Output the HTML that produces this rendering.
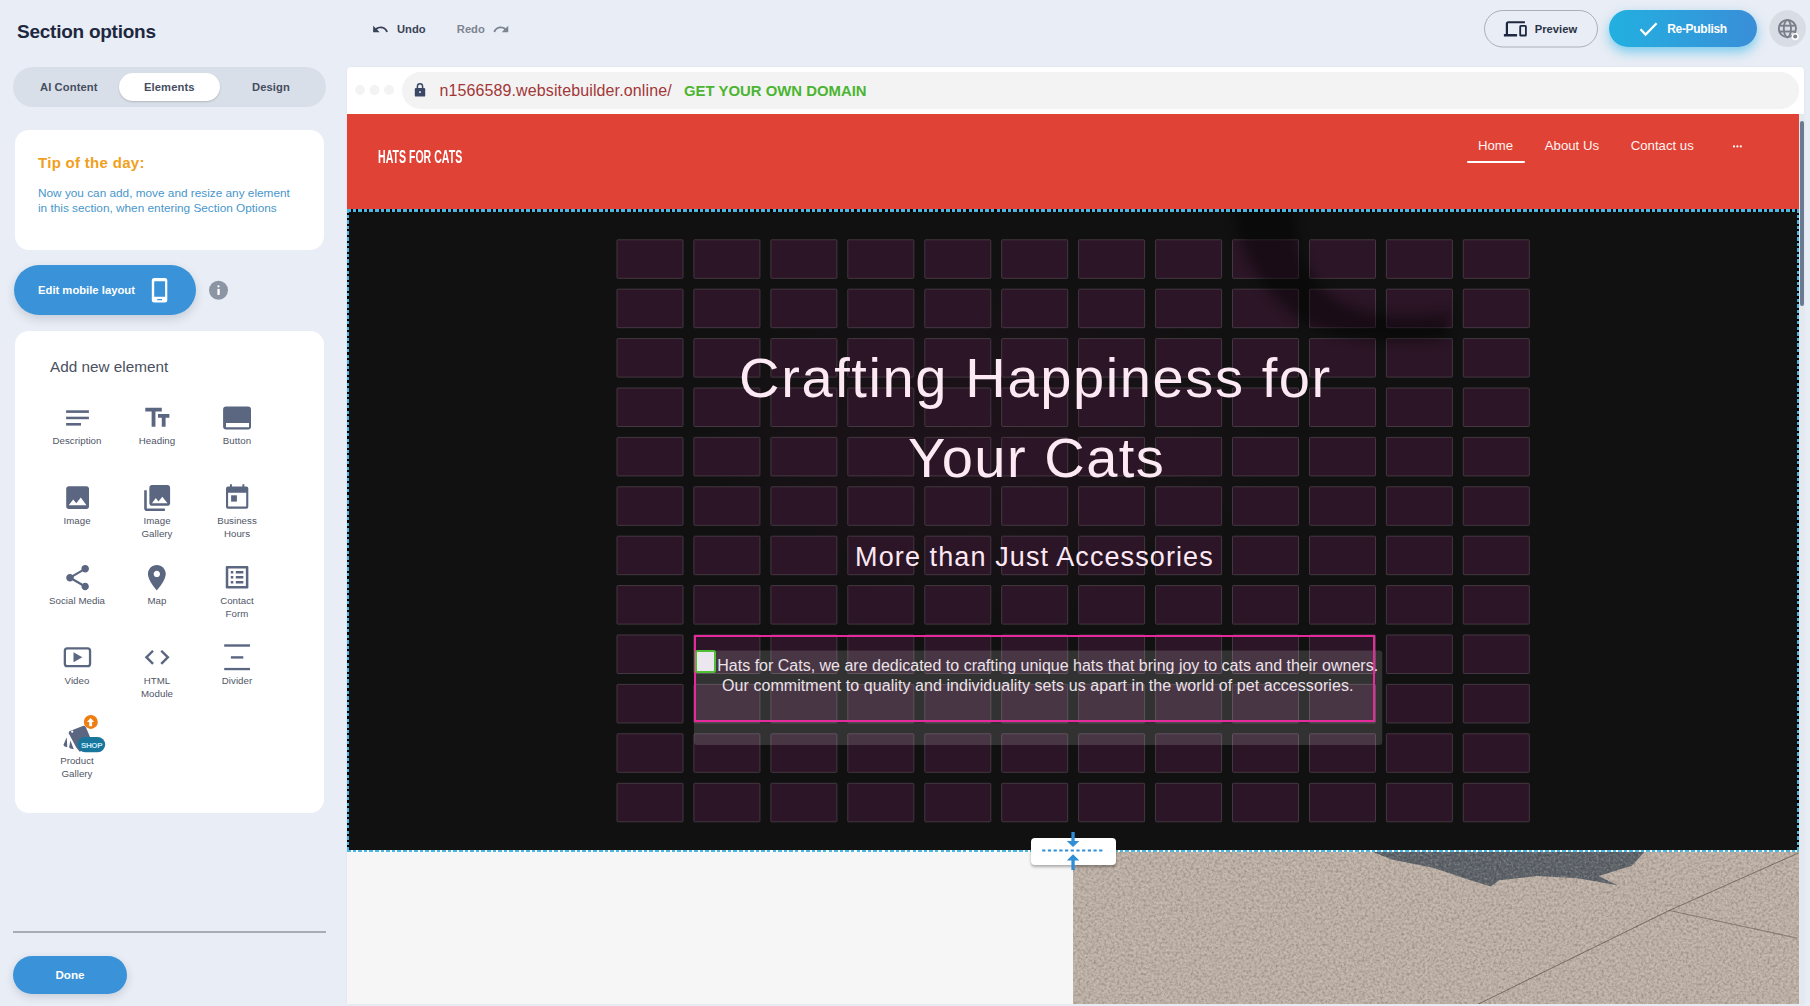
<!DOCTYPE html>
<html><head><meta charset="utf-8">
<style>
*{box-sizing:border-box;margin:0;padding:0}
html,body{width:1810px;height:1006px;overflow:hidden;background:#e9edf5;font-family:"Liberation Sans",sans-serif}
.a{position:absolute;white-space:nowrap}
.title{left:17px;top:20px;font-size:19px;font-weight:bold;color:#1d2840;letter-spacing:-0.25px;line-height:23px}
.tabs{left:13px;top:67px;width:313px;height:40px;border-radius:20px;background:#d9dfe9}
.tabon{left:119px;top:73px;width:101px;height:28px;border-radius:14px;background:#fff;box-shadow:0 1px 2px rgba(0,0,0,.18)}
.tab{top:80px;font-size:11.2px;font-weight:bold;color:#454d5f;line-height:14px;letter-spacing:0.1px}
.card{background:#fff;border-radius:14px}
.tiph{left:38px;top:154.4px;font-size:15px;font-weight:bold;color:#f0a020;line-height:18px;letter-spacing:0.3px}
.tipb{left:38px;top:185.5px;font-size:11.8px;color:#4896cb;line-height:15.5px}
.btn{background:#3a93d8;color:#fff;font-weight:bold}
.lbl{font-size:9.7px;color:#4f5566;text-align:center;line-height:13.3px;width:80px;white-space:normal;letter-spacing:0.05px;margin-top:-0.9px}
.ico{fill:#64728b}
</style></head><body>
<!-- LEFT PANEL -->
<div class="a title">Section options</div>
<div class="a tabs"></div>
<div class="a tabon"></div>
<div class="a tab" style="left:40px">AI Content</div>
<div class="a tab" style="left:144px">Elements</div>
<div class="a tab" style="left:252px">Design</div>

<div class="a card" style="left:15px;top:130px;width:309px;height:120px"></div>
<div class="a tiph">Tip of the day:</div>
<div class="a tipb">Now you can add, move and resize any element<br>in this section, when entering Section Options</div>

<div class="a btn" style="left:14px;top:265px;width:182px;height:50px;border-radius:25px;box-shadow:0 4px 10px rgba(40,60,90,.18)"></div>
<div class="a" style="left:38px;top:283px;font-size:11.25px;font-weight:bold;color:#fff;line-height:14px">Edit mobile layout</div>
<svg class="a" style="left:150px;top:276px" width="20" height="28" viewBox="0 0 20 28"><path fill="#fff" fill-rule="evenodd" d="M4.3 1.9H14.8A2.5 2.5 0 0 1 17.3 4.4V24A2.5 2.5 0 0 1 14.8 26.5H4.3A2.5 2.5 0 0 1 1.8 24V4.4A2.5 2.5 0 0 1 4.3 1.9zM4.2 5.3V20.8H15.1V5.3zM7.3 23V24.3H12V23z"/></svg>
<svg class="a" style="left:208px;top:280px" width="20" height="20" viewBox="0 0 20 20"><circle cx="10.5" cy="10.2" r="9.45" fill="#8b95a3"/><circle cx="10.5" cy="6.3" r="1.15" fill="#fff"/><rect x="9.4" y="8.9" width="2.3" height="6" fill="#fff"/></svg>

<div class="a card" style="left:15px;top:331px;width:309px;height:482px"></div>
<div class="a" style="left:50px;top:357.5px;font-size:15.3px;color:#4a5161;line-height:18px">Add new element</div>
<!-- ELEMENT ICONS -->
<svg class="a" style="left:0;top:0" width="340" height="800" viewBox="0 0 340 800">
<g fill="#5b6680">
<!-- description -->
<rect x="66.1" y="410.3" width="22.8" height="2.6"/><rect x="66.1" y="416.7" width="22.8" height="2.5"/><rect x="66.1" y="423" width="14.9" height="2.6"/>
<!-- heading -->
<path transform="translate(142.1 402.6) scale(1.27)" d="M2.5 4v3h5v12h3V7h5V4h-13zm19 5h-9v3h3v7h3v-7h3V9z"/>
<!-- button -->
<path fill-rule="evenodd" d="M226.1 406.6h21.9a3 3 0 0 1 3 3v16.9a3 3 0 0 1-3 3h-21.9a3 3 0 0 1-3-3v-16.9a3 3 0 0 1 3-3zM226 422.9v4.4h23v-4.4z"/>
<!-- image -->
<path transform="translate(62.4 482.4) scale(1.267)" d="M21 19V5c0-1.1-.9-2-2-2H5c-1.1 0-2 .9-2 2v14c0 1.1.9 2 2 2h14c1.1 0 2-.9 2-2zM8.5 13.5l2.5 3.01L14.5 12l4.5 6H5l3.5-4.5z"/>
<!-- gallery -->
<path transform="translate(141.6 482.5) scale(1.295)" d="M22 16V4c0-1.1-.9-2-2-2H8c-1.1 0-2 .9-2 2v12c0 1.1.9 2 2 2h12c1.1 0 2-.9 2-2zm-11-4l2.03 2.71L16 11l4 5H8l3-4zM2 6v14c0 1.1.9 2 2 2h14v-2H4V6H2z"/>
<!-- calendar -->
<path fill-rule="evenodd" d="M228 486.6h18.3a2 2 0 0 1 2 2v18.2a2 2 0 0 1-2 2h-18.3a2 2 0 0 1-2-2v-18.2a2 2 0 0 1 2-2zM228.1 492.7v13.9h18.1v-13.9z"/>
<rect x="230" y="484.2" width="1.9" height="3"/><rect x="242.4" y="484.2" width="1.9" height="3"/><rect x="231.1" y="495.3" width="5.8" height="6.3"/>
<!-- share -->
<path transform="translate(62.4 562.5) scale(1.265)" d="M18 16.08c-.76 0-1.44.3-1.96.77L8.91 12.7c.05-.23.09-.46.09-.7s-.04-.47-.09-.7l7.05-4.11c.54.5 1.25.81 2.04.81 1.66 0 3-1.34 3-3s-1.34-3-3-3-3 1.34-3 3c0 .24.04.47.09.7L8.04 9.81C7.5 9.31 6.79 9 6 9c-1.66 0-3 1.34-3 3s1.34 3 3 3c.79 0 1.5-.31 2.04-.81l7.12 4.16c-.05.21-.08.43-.08.65 0 1.61 1.31 2.92 2.92 2.92 1.61 0 2.92-1.31 2.92-2.92s-1.31-2.92-2.92-2.92z"/>
<!-- map -->
<path transform="translate(141.6 562.5) scale(1.27)" d="M12 2C8.13 2 5 5.130 5 9c0 5.25 7 13 7 13s7-7.75 7-13c0-3.87-3.13-7-7-7zm0 9.5c-1.38 0-2.5-1.12-2.5-2.5s1.12-2.5 2.5-2.5 2.5 1.12 2.5 2.5-1.12 2.5-2.5 2.5z"/>
<!-- contact form -->
<path transform="translate(222 562.2) scale(1.256)" d="M19 5v14H5V5h14m1.1-2H3.9c-.5 0-.9.4-.9.9v16.2c0 .4.4.9.9.9h16.2c.4 0 .9-.5.9-.9V3.9c0-.5-.5-.9-.9-.9zM11 7h6v2h-6V7zm0 4h6v2h-6v-2zm0 4h6v2h-6zM7 7h2v2H7zm0 4h2v2H7zm0 4h2v2H7z"/>
<!-- video -->
<rect x="64.85" y="648.45" width="25.2" height="17.7" rx="2.5" fill="none" stroke="#5b6680" stroke-width="2.3"/>
<path d="M73.5 652.3L82.3 657.3L73.5 662.3z"/>
<!-- code -->
<path transform="translate(142.2 642.5) scale(1.245 1.233)" d="M9.4 16.6L4.8 12l4.6-4.6L8 6l-6 6 6 6 1.4-1.4zm5.2 0l4.6-4.6-4.6-4.6L16 6l6 6-6 6-1.4-1.4z"/>
<!-- divider -->
<rect x="224.2" y="644.3" width="25.8" height="2.4"/><rect x="230.9" y="656.2" width="12.4" height="2.4"/><rect x="224.2" y="667.9" width="25.8" height="2.3"/>
<!-- product gallery -->
<path d="M69.9 730.9L82.8 725.9Q85 725.2 86 727.4L90 737L80 752L76.4 747.8L68.8 733.5Q68.4 731.6 69.9 730.9z"/>
<path d="M66.7 737.3L63.6 744.5Q63.4 746 64.8 746.5L67.3 747.2z"/>
<path d="M70.4 740.5L69.2 746.8Q69 748.2 70.5 748.6L73.8 749.3z"/>
</g>
<circle cx="72.2" cy="731.7" r="1.1" fill="#fff"/>
<rect x="77.6" y="737" width="27.6" height="15.2" rx="7.6" fill="#18759b"/>
<text x="91.6" y="747.6" text-anchor="middle" font-family="Liberation Sans" font-weight="bold" font-size="8" fill="#c4e8f6" letter-spacing="-0.35">SHOP</text>
<circle cx="90.8" cy="721.9" r="7" fill="#ee7d12"/>
<path d="M87 722.1L90.6 717.9L94.2 722.1H92.1V726.3H89.2V722.1z" fill="#fff"/>
</svg>
<!-- labels -->
<div class="a lbl" style="left:37px;top:435px">Description</div>
<div class="a lbl" style="left:117px;top:435px">Heading</div>
<div class="a lbl" style="left:197px;top:435px">Button</div>
<div class="a lbl" style="left:37px;top:515px">Image</div>
<div class="a lbl" style="left:117px;top:515px">Image<br>Gallery</div>
<div class="a lbl" style="left:197px;top:515px">Business<br>Hours</div>
<div class="a lbl" style="left:37px;top:595px">Social Media</div>
<div class="a lbl" style="left:117px;top:595px">Map</div>
<div class="a lbl" style="left:197px;top:595px">Contact<br>Form</div>
<div class="a lbl" style="left:37px;top:674.5px">Video</div>
<div class="a lbl" style="left:117px;top:674.5px">HTML<br>Module</div>
<div class="a lbl" style="left:197px;top:674.5px">Divider</div>
<div class="a lbl" style="left:37px;top:754.5px">Product<br>Gallery</div>

<div class="a" style="left:13px;top:931px;width:313px;height:2px;background:#a8acb4"></div>
<div class="a btn" style="left:13px;top:956px;width:114px;height:38px;border-radius:19px;box-shadow:0 3px 8px rgba(40,60,90,.18)"></div>
<div class="a" style="left:13px;top:968px;width:114px;text-align:center;font-size:11.6px;font-weight:bold;color:#fff;line-height:14px">Done</div>
<!-- TOP BAR -->
<svg class="a" style="left:0;top:0" width="1810" height="60" viewBox="0 0 1810 60">
<path fill="#394356" transform="translate(371.7 20.7) scale(0.72)" d="M12.5 8c-2.65 0-5.05.99-6.9 2.6L2 7v9h9l-3.62-3.62c1.39-1.16 3.16-1.88 5.12-1.88 3.54 0 6.55 2.31 7.6 5.5l2.37-.78C21.08 11.03 17.15 8 12.5 8z"/>
<path fill="#7c8492" transform="translate(492.4 20.7) scale(0.72)" d="M18.4 10.6C16.55 8.99 14.15 8 11.5 8c-4.65 0-8.58 3.030-9.96 7.22L3.9 16c1.05-3.19 4.05-5.5 7.6-5.5 1.95 0 3.73.72 5.12 1.88L13 16h9V7l-3.6 3.6z"/>
<!-- preview -->
<rect x="1484.5" y="10.5" width="113" height="36.5" rx="18.25" fill="none" stroke="#a9afb9" stroke-width="1"/>
<g fill="#1d2740">
<path d="M1508.6 21.2H1524.9V23.3H1508V35H1505.8V23.9Q1505.8 21.2 1508.6 21.2z"/>
<rect x="1503.9" y="33.9" width="13.2" height="2.6" rx="0.6"/>
<path fill-rule="evenodd" d="M1520.8 25H1525.3Q1526.8 25 1526.8 26.5V35Q1526.8 36.5 1525.3 36.5H1520.8Q1519.3 36.5 1519.3 35V26.5Q1519.3 25 1520.8 25zM1521.1 26.8V34.6H1525V26.8z"/>
</g>
<!-- globe -->
<circle cx="1787.6" cy="28.6" r="18.3" fill="#d8dde5"/>
<g fill="none" stroke="#7a7f89" stroke-width="1.9">
<circle cx="1787.4" cy="28.6" r="8.6"/>
<ellipse cx="1787.4" cy="28.6" rx="3.6" ry="8.6"/>
<line x1="1779" y1="25.7" x2="1796" y2="25.7"/>
<line x1="1779" y1="31.5" x2="1796" y2="31.5"/>
</g>
<circle cx="1795.2" cy="36.6" r="3.6" fill="#fff"/>
<circle cx="1795.2" cy="36.6" r="2" fill="#7a7f89"/>
</svg>
<div class="a" style="left:397px;top:22px;font-size:11.2px;font-weight:bold;color:#394356;line-height:14px">Undo</div>
<div class="a" style="left:456.8px;top:22px;font-size:11.2px;font-weight:bold;color:#7c8492;line-height:14px">Redo</div>
<div class="a" style="left:1534.8px;top:22.3px;font-size:11.2px;font-weight:bold;color:#2a3346;line-height:14px">Preview</div>
<div class="a" style="left:1609.4px;top:9.8px;width:147.6px;height:37.5px;border-radius:19px;background:linear-gradient(90deg,#22b0e0,#3a8ed8);box-shadow:0 5px 12px rgba(30,175,230,.55)"></div>
<svg class="a" style="left:1636px;top:18px" width="26" height="22" viewBox="0 0 26 22"><path d="M4.5 11.3L9.6 16.6L20.6 5.2" fill="none" stroke="#fff" stroke-width="2.3"/></svg>
<div class="a" style="left:1667.2px;top:22.1px;font-size:12px;font-weight:bold;color:#fff;line-height:14px;letter-spacing:-0.3px">Re-Publish</div>
<!-- BROWSER -->
<div class="a" style="left:347px;top:67px;width:1457.4px;height:937px;background:#fff;border-radius:4px 4px 0 0;box-shadow:0 0 3px rgba(0,0,0,.05)"></div>
<div class="a" style="left:1799.4px;top:114px;width:5px;height:890px;background:#e4e8ef"></div>
<div class="a" style="left:1799.6px;top:121px;width:4.8px;height:185px;border-radius:2.4px;background:#6b7a90"></div>
<div class="a" style="left:402px;top:72px;width:1397px;height:37px;border-radius:18.5px;background:#f3f3f3"></div>
<svg class="a" style="left:347px;top:67px" width="100" height="47" viewBox="0 0 100 47">
<circle cx="13" cy="23" r="5" fill="#f3f3f3"/><circle cx="27.5" cy="23" r="5" fill="#f3f3f3"/><circle cx="42" cy="23" r="5" fill="#f3f3f3"/>
<path d="M70.4 21.5V19.4a2.6 2.6 0 0 1 5.2 0V21.5" fill="none" stroke="#3a4865" stroke-width="1.5"/>
<rect x="67.8" y="21" width="10.4" height="8.6" rx="1.2" fill="#3a4865"/><rect x="72.2" y="24.3" width="1.6" height="1.6" fill="#fff"/>
</svg>
<div class="a" style="left:439.4px;top:81.5px;font-size:16px;color:#a23737;line-height:18px;letter-spacing:0.12px">n1566589.websitebuilder.online/</div>
<div class="a" style="left:684px;top:81.9px;font-size:14.9px;font-weight:bold;color:#4bb531;line-height:18px">GET YOUR OWN DOMAIN</div>

<!-- HEADER -->
<div class="a" style="left:347px;top:114px;width:1452px;height:96px;background:#e04236"></div>
<div class="a" style="left:377.9px;top:146.2px;font-size:19px;font-weight:bold;color:#fff;line-height:22px;transform:scaleX(0.5565);transform-origin:0 0">HATS FOR CATS</div>
<div class="a" style="left:1478px;top:137.6px;font-size:13.2px;color:#fff4f2;line-height:16px">Home</div>
<div class="a" style="left:1544.8px;top:137.6px;font-size:13.2px;color:#fff4f2;line-height:16px">About Us</div>
<div class="a" style="left:1630.7px;top:137.6px;font-size:13.2px;color:#fff4f2;line-height:16px">Contact us</div>
<div class="a" style="left:1467px;top:160.9px;width:57.7px;height:2px;border-radius:1px;background:#fff"></div>
<svg class="a" style="left:1730px;top:143px" width="14" height="6" viewBox="0 0 14 6"><circle cx="4" cy="3.4" r="1.1" fill="#fff"/><circle cx="7.4" cy="3.4" r="1.1" fill="#fff"/><circle cx="10.8" cy="3.4" r="1.1" fill="#fff"/></svg>

<!-- HERO -->
<div class="a" style="left:347px;top:209px;width:1452px;height:643px;background:#111111;overflow:hidden">
<svg class="a" style="left:0;top:0" width="1452" height="643" viewBox="0 0 1452 643">
<defs>
<radialGradient id="g1" cx="0.5" cy="0.5" r="0.5"><stop offset="0" stop-color="#3a1530" stop-opacity=".35"/><stop offset="1" stop-color="#3a1530" stop-opacity="0"/></radialGradient>
</defs>
<ellipse cx="640" cy="240" rx="300" ry="180" fill="url(#g1)"/>
<g fill="#2b1526" stroke="#443840" stroke-width="1">
<rect x="270.0" y="30.8" width="66" height="38.5" rx="0.7"/>
<rect x="346.9" y="30.8" width="66" height="38.5" rx="0.7"/>
<rect x="423.9" y="30.8" width="66" height="38.5" rx="0.7"/>
<rect x="500.8" y="30.8" width="66" height="38.5" rx="0.7"/>
<rect x="577.8" y="30.8" width="66" height="38.5" rx="0.7"/>
<rect x="654.7" y="30.8" width="66" height="38.5" rx="0.7"/>
<rect x="731.6" y="30.8" width="66" height="38.5" rx="0.7"/>
<rect x="808.6" y="30.8" width="66" height="38.5" rx="0.7"/>
<rect x="885.5" y="30.8" width="66" height="38.5" rx="0.7"/>
<rect x="962.5" y="30.8" width="66" height="38.5" rx="0.7"/>
<rect x="1039.4" y="30.8" width="66" height="38.5" rx="0.7"/>
<rect x="1116.3" y="30.8" width="66" height="38.5" rx="0.7"/>
<rect x="270.0" y="80.2" width="66" height="38.5" rx="0.7"/>
<rect x="346.9" y="80.2" width="66" height="38.5" rx="0.7"/>
<rect x="423.9" y="80.2" width="66" height="38.5" rx="0.7"/>
<rect x="500.8" y="80.2" width="66" height="38.5" rx="0.7"/>
<rect x="577.8" y="80.2" width="66" height="38.5" rx="0.7"/>
<rect x="654.7" y="80.2" width="66" height="38.5" rx="0.7"/>
<rect x="731.6" y="80.2" width="66" height="38.5" rx="0.7"/>
<rect x="808.6" y="80.2" width="66" height="38.5" rx="0.7"/>
<rect x="885.5" y="80.2" width="66" height="38.5" rx="0.7"/>
<rect x="962.5" y="80.2" width="66" height="38.5" rx="0.7"/>
<rect x="1039.4" y="80.2" width="66" height="38.5" rx="0.7"/>
<rect x="1116.3" y="80.2" width="66" height="38.5" rx="0.7"/>
<rect x="270.0" y="129.6" width="66" height="38.5" rx="0.7"/>
<rect x="346.9" y="129.6" width="66" height="38.5" rx="0.7"/>
<rect x="423.9" y="129.6" width="66" height="38.5" rx="0.7"/>
<rect x="500.8" y="129.6" width="66" height="38.5" rx="0.7"/>
<rect x="577.8" y="129.6" width="66" height="38.5" rx="0.7"/>
<rect x="654.7" y="129.6" width="66" height="38.5" rx="0.7"/>
<rect x="731.6" y="129.6" width="66" height="38.5" rx="0.7"/>
<rect x="808.6" y="129.6" width="66" height="38.5" rx="0.7"/>
<rect x="885.5" y="129.6" width="66" height="38.5" rx="0.7"/>
<rect x="962.5" y="129.6" width="66" height="38.5" rx="0.7"/>
<rect x="1039.4" y="129.6" width="66" height="38.5" rx="0.7"/>
<rect x="1116.3" y="129.6" width="66" height="38.5" rx="0.7"/>
<rect x="270.0" y="179.0" width="66" height="38.5" rx="0.7"/>
<rect x="346.9" y="179.0" width="66" height="38.5" rx="0.7"/>
<rect x="423.9" y="179.0" width="66" height="38.5" rx="0.7"/>
<rect x="500.8" y="179.0" width="66" height="38.5" rx="0.7"/>
<rect x="577.8" y="179.0" width="66" height="38.5" rx="0.7"/>
<rect x="654.7" y="179.0" width="66" height="38.5" rx="0.7"/>
<rect x="731.6" y="179.0" width="66" height="38.5" rx="0.7"/>
<rect x="808.6" y="179.0" width="66" height="38.5" rx="0.7"/>
<rect x="885.5" y="179.0" width="66" height="38.5" rx="0.7"/>
<rect x="962.5" y="179.0" width="66" height="38.5" rx="0.7"/>
<rect x="1039.4" y="179.0" width="66" height="38.5" rx="0.7"/>
<rect x="1116.3" y="179.0" width="66" height="38.5" rx="0.7"/>
<rect x="270.0" y="228.4" width="66" height="38.5" rx="0.7"/>
<rect x="346.9" y="228.4" width="66" height="38.5" rx="0.7"/>
<rect x="423.9" y="228.4" width="66" height="38.5" rx="0.7"/>
<rect x="500.8" y="228.4" width="66" height="38.5" rx="0.7"/>
<rect x="577.8" y="228.4" width="66" height="38.5" rx="0.7"/>
<rect x="654.7" y="228.4" width="66" height="38.5" rx="0.7"/>
<rect x="731.6" y="228.4" width="66" height="38.5" rx="0.7"/>
<rect x="808.6" y="228.4" width="66" height="38.5" rx="0.7"/>
<rect x="885.5" y="228.4" width="66" height="38.5" rx="0.7"/>
<rect x="962.5" y="228.4" width="66" height="38.5" rx="0.7"/>
<rect x="1039.4" y="228.4" width="66" height="38.5" rx="0.7"/>
<rect x="1116.3" y="228.4" width="66" height="38.5" rx="0.7"/>
<rect x="270.0" y="277.8" width="66" height="38.5" rx="0.7"/>
<rect x="346.9" y="277.8" width="66" height="38.5" rx="0.7"/>
<rect x="423.9" y="277.8" width="66" height="38.5" rx="0.7"/>
<rect x="500.8" y="277.8" width="66" height="38.5" rx="0.7"/>
<rect x="577.8" y="277.8" width="66" height="38.5" rx="0.7"/>
<rect x="654.7" y="277.8" width="66" height="38.5" rx="0.7"/>
<rect x="731.6" y="277.8" width="66" height="38.5" rx="0.7"/>
<rect x="808.6" y="277.8" width="66" height="38.5" rx="0.7"/>
<rect x="885.5" y="277.8" width="66" height="38.5" rx="0.7"/>
<rect x="962.5" y="277.8" width="66" height="38.5" rx="0.7"/>
<rect x="1039.4" y="277.8" width="66" height="38.5" rx="0.7"/>
<rect x="1116.3" y="277.8" width="66" height="38.5" rx="0.7"/>
<rect x="270.0" y="327.2" width="66" height="38.5" rx="0.7"/>
<rect x="346.9" y="327.2" width="66" height="38.5" rx="0.7"/>
<rect x="423.9" y="327.2" width="66" height="38.5" rx="0.7"/>
<rect x="500.8" y="327.2" width="66" height="38.5" rx="0.7"/>
<rect x="577.8" y="327.2" width="66" height="38.5" rx="0.7"/>
<rect x="654.7" y="327.2" width="66" height="38.5" rx="0.7"/>
<rect x="731.6" y="327.2" width="66" height="38.5" rx="0.7"/>
<rect x="808.6" y="327.2" width="66" height="38.5" rx="0.7"/>
<rect x="885.5" y="327.2" width="66" height="38.5" rx="0.7"/>
<rect x="962.5" y="327.2" width="66" height="38.5" rx="0.7"/>
<rect x="1039.4" y="327.2" width="66" height="38.5" rx="0.7"/>
<rect x="1116.3" y="327.2" width="66" height="38.5" rx="0.7"/>
<rect x="270.0" y="376.6" width="66" height="38.5" rx="0.7"/>
<rect x="346.9" y="376.6" width="66" height="38.5" rx="0.7"/>
<rect x="423.9" y="376.6" width="66" height="38.5" rx="0.7"/>
<rect x="500.8" y="376.6" width="66" height="38.5" rx="0.7"/>
<rect x="577.8" y="376.6" width="66" height="38.5" rx="0.7"/>
<rect x="654.7" y="376.6" width="66" height="38.5" rx="0.7"/>
<rect x="731.6" y="376.6" width="66" height="38.5" rx="0.7"/>
<rect x="808.6" y="376.6" width="66" height="38.5" rx="0.7"/>
<rect x="885.5" y="376.6" width="66" height="38.5" rx="0.7"/>
<rect x="962.5" y="376.6" width="66" height="38.5" rx="0.7"/>
<rect x="1039.4" y="376.6" width="66" height="38.5" rx="0.7"/>
<rect x="1116.3" y="376.6" width="66" height="38.5" rx="0.7"/>
<rect x="270.0" y="426.0" width="66" height="38.5" rx="0.7"/>
<rect x="346.9" y="426.0" width="66" height="38.5" rx="0.7"/>
<rect x="423.9" y="426.0" width="66" height="38.5" rx="0.7"/>
<rect x="500.8" y="426.0" width="66" height="38.5" rx="0.7"/>
<rect x="577.8" y="426.0" width="66" height="38.5" rx="0.7"/>
<rect x="654.7" y="426.0" width="66" height="38.5" rx="0.7"/>
<rect x="731.6" y="426.0" width="66" height="38.5" rx="0.7"/>
<rect x="808.6" y="426.0" width="66" height="38.5" rx="0.7"/>
<rect x="885.5" y="426.0" width="66" height="38.5" rx="0.7"/>
<rect x="962.5" y="426.0" width="66" height="38.5" rx="0.7"/>
<rect x="1039.4" y="426.0" width="66" height="38.5" rx="0.7"/>
<rect x="1116.3" y="426.0" width="66" height="38.5" rx="0.7"/>
<rect x="270.0" y="475.4" width="66" height="38.5" rx="0.7"/>
<rect x="346.9" y="475.4" width="66" height="38.5" rx="0.7"/>
<rect x="423.9" y="475.4" width="66" height="38.5" rx="0.7"/>
<rect x="500.8" y="475.4" width="66" height="38.5" rx="0.7"/>
<rect x="577.8" y="475.4" width="66" height="38.5" rx="0.7"/>
<rect x="654.7" y="475.4" width="66" height="38.5" rx="0.7"/>
<rect x="731.6" y="475.4" width="66" height="38.5" rx="0.7"/>
<rect x="808.6" y="475.4" width="66" height="38.5" rx="0.7"/>
<rect x="885.5" y="475.4" width="66" height="38.5" rx="0.7"/>
<rect x="962.5" y="475.4" width="66" height="38.5" rx="0.7"/>
<rect x="1039.4" y="475.4" width="66" height="38.5" rx="0.7"/>
<rect x="1116.3" y="475.4" width="66" height="38.5" rx="0.7"/>
<rect x="270.0" y="524.8" width="66" height="38.5" rx="0.7"/>
<rect x="346.9" y="524.8" width="66" height="38.5" rx="0.7"/>
<rect x="423.9" y="524.8" width="66" height="38.5" rx="0.7"/>
<rect x="500.8" y="524.8" width="66" height="38.5" rx="0.7"/>
<rect x="577.8" y="524.8" width="66" height="38.5" rx="0.7"/>
<rect x="654.7" y="524.8" width="66" height="38.5" rx="0.7"/>
<rect x="731.6" y="524.8" width="66" height="38.5" rx="0.7"/>
<rect x="808.6" y="524.8" width="66" height="38.5" rx="0.7"/>
<rect x="885.5" y="524.8" width="66" height="38.5" rx="0.7"/>
<rect x="962.5" y="524.8" width="66" height="38.5" rx="0.7"/>
<rect x="1039.4" y="524.8" width="66" height="38.5" rx="0.7"/>
<rect x="1116.3" y="524.8" width="66" height="38.5" rx="0.7"/>
<rect x="270.0" y="574.3" width="66" height="38.5" rx="0.7"/>
<rect x="346.9" y="574.3" width="66" height="38.5" rx="0.7"/>
<rect x="423.9" y="574.3" width="66" height="38.5" rx="0.7"/>
<rect x="500.8" y="574.3" width="66" height="38.5" rx="0.7"/>
<rect x="577.8" y="574.3" width="66" height="38.5" rx="0.7"/>
<rect x="654.7" y="574.3" width="66" height="38.5" rx="0.7"/>
<rect x="731.6" y="574.3" width="66" height="38.5" rx="0.7"/>
<rect x="808.6" y="574.3" width="66" height="38.5" rx="0.7"/>
<rect x="885.5" y="574.3" width="66" height="38.5" rx="0.7"/>
<rect x="962.5" y="574.3" width="66" height="38.5" rx="0.7"/>
<rect x="1039.4" y="574.3" width="66" height="38.5" rx="0.7"/>
<rect x="1116.3" y="574.3" width="66" height="38.5" rx="0.7"/>
</g>
<filter id="bl" x="-20%" y="-20%" width="140%" height="140%"><feGaussianBlur stdDeviation="6"/></filter>
<path d="M885 -10L950 -10C943 41 963 86 1013 101C1053 111 1083 106 1103 103L1100 129C1053 136 983 131 953 111C913 81 890 41 885 -10z" fill="#040404" opacity=".4" filter="url(#bl)"/>
<rect x="347" y="441.5" width="688.3" height="94.5" rx="3" fill="#ffffff" fill-opacity="0.14"/>
</svg>
</div>
<div class="a" style="left:739.1px;top:338.9px;font-size:56px;color:#fde9f4;line-height:78.3px;letter-spacing:1.62px">Crafting Happiness for</div>
<div class="a" style="left:908px;top:419.2px;font-size:56px;color:#fde9f4;line-height:78.3px;letter-spacing:1.5px">Your Cats</div>
<div class="a" style="left:855.1px;top:541.2px;font-size:27px;color:#fde9f4;line-height:32px;letter-spacing:1.1px">More than Just Accessories</div>
<div class="a" style="left:694px;top:634.8px;width:681.3px;height:87.6px;border:2px solid #e42a9c"></div>
<div class="a" style="left:717.3px;top:655.6px;font-size:16px;color:#ece3ea;line-height:20.7px">Hats for Cats, we are dedicated to crafting unique hats that bring joy to cats and their owners.</div>
<div class="a" style="left:722px;top:676.3px;font-size:16px;color:#ece3ea;line-height:20.7px;letter-spacing:0.07px">Our commitment to quality and individuality sets us apart in the world of pet accessories.</div>
<div class="a" style="left:694.7px;top:650.2px;width:21.3px;height:22.6px;border:2.2px solid #4fbf35;border-radius:2.5px;background:#ece6ee"></div>

<!-- dashed section border -->
<div class="a" style="left:347px;top:209.3px;width:1452px;height:2.6px;background:repeating-linear-gradient(90deg,#4ab6e2 0 3.5px,#000 3.5px 5.6px)"></div>
<div class="a" style="left:347px;top:209.3px;width:2.2px;height:643px;background:repeating-linear-gradient(180deg,#4ab6e2 0 3.5px,#000 3.5px 5.6px)"></div>
<div class="a" style="left:1797px;top:209.3px;width:2.1px;height:643px;background:repeating-linear-gradient(180deg,#4ab6e2 0 3.5px,#000 3.5px 5.6px)"></div>

<!-- BOTTOM -->
<div class="a" style="left:347px;top:852px;width:726px;height:152px;background:#f6f6f6"></div>
<svg class="a" style="left:1073px;top:852px" width="726" height="152" viewBox="0 0 726 152">
<defs>
<filter id="noise" x="0" y="0" width="100%" height="100%" color-interpolation-filters="sRGB">
<feTurbulence type="fractalNoise" baseFrequency="0.38" numOctaves="2" seed="7"/>
<feColorMatrix type="matrix" values="0 0 0 0 0  0 0 0 0 0  0 0 0 0 0  2.2 0 0 0 -0.9"/>
</filter>
<filter id="noise2" x="0" y="0" width="100%" height="100%" color-interpolation-filters="sRGB">
<feTurbulence type="fractalNoise" baseFrequency="0.42" numOctaves="2" seed="11"/>
<feColorMatrix type="matrix" values="0 0 0 0 1  0 0 0 0 0.97  0 0 0 0 0.95  2.2 0 0 0 -1.0"/>
</filter>
</defs>
<rect width="726" height="152" fill="#bfb2a7"/>
<path d="M300 0L318.5 7.5L360 15.8L397.3 28.2L418 34.4L426.3 28.2L463.6 24.1L505 26.2L544.4 33.2L525.8 24.1L558.9 13.7L571.3 0z" fill="#525a63" opacity=".9"/>
<rect width="726" height="152" filter="url(#noise)" opacity=".2"/>
<rect width="726" height="152" filter="url(#noise2)" opacity=".25"/>
<path d="M401.4 154L596.2 58.5L724.7 1.3" fill="none" stroke="#625548" stroke-width="1" opacity=".75"/>
<path d="M596.2 58.5L724.7 86.2" fill="none" stroke="#625548" stroke-width="1" opacity=".6"/>
</svg>
<div class="a" style="left:347px;top:849.6px;width:1452px;height:2.6px;background:repeating-linear-gradient(90deg,#4ab6e2 0 3.5px,#fff 3.5px 5.6px)"></div>

<!-- resize handle -->
<div class="a" style="left:1030.8px;top:837.5px;width:85.1px;height:27.6px;background:#fff;border-radius:4px;box-shadow:0 2px 3px rgba(0,0,0,.3)"></div>
<svg class="a" style="left:1030px;top:828px" width="90" height="46" viewBox="0 0 90 46">
<g fill="#2f8fd6">
<rect x="41.4" y="4" width="3.3" height="10"/><path d="M36.8 13.1H49.3L43.05 19z"/>
<path d="M36.8 32.6H49.3L43.05 26.2z"/><rect x="41.4" y="32" width="3.3" height="10"/>
</g>
<line x1="12.2" y1="22.5" x2="73" y2="22.5" stroke="#2f8fd6" stroke-width="2.2" stroke-dasharray="3.2 2.5"/>
</svg>
</body></html>
